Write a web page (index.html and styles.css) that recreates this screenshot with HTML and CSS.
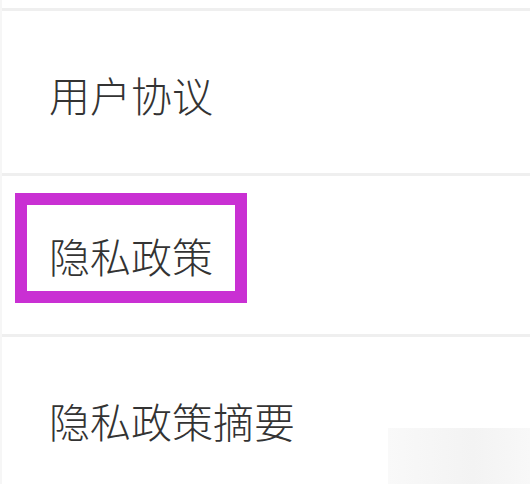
FILE: index.html
```html
<!DOCTYPE html>
<html lang="zh-CN">
<head>
  <meta charset="UTF-8">
  <meta name="viewport" content="width=device-width, initial-scale=1.0">
  <title>设置</title>
  <link rel="stylesheet" href="styles.css">
</head>
<body>
  <div id="settings">
    <div class="item">用户协议</div>
    <div class="item item-marked">
      <span class="mark">隐私政策</span>
    </div>
    <div class="item">隐私政策摘要</div>
  </div>
  <div class="smudge"></div>
</body>
</html>
```
FILE: styles.css
```css
body {
  margin: 0;
  padding: 0;
  background-color: #ffffff;
  font-family: "Noto Sans CJK SC", "Noto Sans", sans-serif;
  font-weight: 300;
  color: #333333;
  overflow: hidden;
  height: 484px;
  position: relative;
}

#settings {
  padding-top: 8px;
  border-left: 2px solid #f6f6f6;
}

.item {
  border-top: 3px solid #efefef;
  font-size: 41px;
  line-height: 40px;
  padding: 63px 0 59px 47px;
}

.item-marked {
  padding: 17px 0 31px 13px;
}

.mark {
  display: inline-block;
  border: 12px solid #c930d3;
  padding: 30px 22px 16px 22px;
}

/* faint patch in the bottom right corner */
.smudge {
  position: absolute;
  right: 0;
  bottom: 0;
  width: 142px;
  height: 56px;
  background: linear-gradient(90deg, #f9f9f9, #f3f3f3 60%, #f8f8f8);
}
```
